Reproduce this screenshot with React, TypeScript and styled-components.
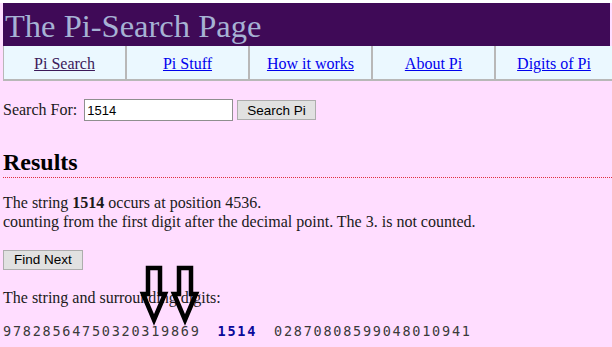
import styled, { createGlobalStyle } from "styled-components";

const GlobalStyle = createGlobalStyle`
  html, body {
    margin: 0;
    padding: 0;
    background-color: #ffddff;
    overflow: hidden;
  }
  body {
    font-family: "Liberation Serif", "Times New Roman", serif;
    font-size: 16px;
    color: #1a1a1a;
  }
`;

const Page = styled.div`
  position: relative;
  box-sizing: border-box;
  width: 612px;
  padding: 3px 0 0 3px;
  background: linear-gradient(#ffffff 0 3px, #ffddff 3px);
`;

const Header = styled.header`
  background-color: #3f0a57;
  height: 43px;
  margin-right: 2px;
  display: flex;
  align-items: center;
  padding-left: 2px;
`;

const Title = styled.h1`
  margin: 0;
  font-weight: normal;
  font-size: 32.5px;
  color: #a6b2d4;
  line-height: 1;
  padding-top: 3px;
`;

const Nav = styled.nav`
  display: grid;
  grid-template-columns: repeat(4, 123px) 1fr;
  background-color: #ebf8ff;
  border-bottom: 2px solid #b8b8b8;
  border-left: 1px solid #b8b8b8;
  height: 33px;
`;

const NavCell = styled.div<{ $last?: boolean }>`
  display: flex;
  align-items: center;
  justify-content: center;
  padding-top: 2px;
  border-right: ${(p) => (p.$last ? "none" : "2px solid #b8b8b8")};
`;

const NavLink = styled.a<{ $visited?: boolean }>`
  color: ${(p) => (p.$visited ? "#3c1a5a" : "#0000ee")};
  text-decoration: underline;
  font-size: 16px;
`;

const SearchRow = styled.form`
  display: flex;
  align-items: center;
  margin-top: 18px;
`;

const Label = styled.label`
  font-size: 16px;
  margin-right: 7px;
`;

const Input = styled.input`
  width: 143px;
  height: 18px;
  border: 1px solid #8f8f8f;
  padding: 1px 2px;
  font-family: "Liberation Sans", Arial, sans-serif;
  font-size: 13px;
  color: #000;
  margin: 0 4px 0 0;
`;

const Button = styled.button<{ $pad?: number }>`
  font-family: "Liberation Sans", Arial, sans-serif;
  font-size: 13.5px;
  color: #000;
  background-color: #e1e1e1;
  border: 1px solid #adadad;
  height: 20px;
  padding: 0 ${(p) => p.$pad ?? 9}px;
  margin: 0;
`;

const ResultsHeading = styled.h2`
  margin: 28px 0 0 0;
  font-size: 24px;
  font-weight: bold;
  color: #000;
  padding-bottom: 0;
  border-bottom: 1px dotted #e03040;
  line-height: 1.15;
`;

const Para = styled.p`
  margin: 15px 0 0 0;
  line-height: 19px;
`;

const FindRow = styled.div`
  margin-top: 19px;
  display: flex;
`;

const DigitsLabel = styled.p`
  margin: 18px 0 0 0;
  line-height: 19px;
`;

const Digits = styled.div`
  margin-top: 16px;
  font-family: "DejaVu Sans Mono", monospace;
  font-size: 13.5px;
  letter-spacing: 1.75px;
  color: #3a3a3a;
  display: flex;
  gap: 17px;
`;

const Match = styled.span`
  color: #0a0a9a;
  font-weight: bold;
`;

const Arrows = styled.svg`
  position: absolute;
  left: 138px;
  top: 264px;
  pointer-events: none;
`;

function DownArrow({ cx }: { cx: number }) {
  // hollow arrow: narrow shaft, wider head
  const d = `M${cx - 6} 4 L${cx + 6} 4 L${cx + 6} 30 L${cx + 11} 30 L${cx} 56 L${cx - 11} 30 L${cx - 6} 30 Z`;
  return <path d={d} fill="none" stroke="#000" strokeWidth={4.5} />;
}

export default function App() {
  return (
    <>
      <GlobalStyle />
      <Page>
        <Header>
          <Title>The Pi-Search Page</Title>
        </Header>
        <Nav>
          <NavCell>
            <NavLink href="#" $visited>
              Pi Search
            </NavLink>
          </NavCell>
          <NavCell>
            <NavLink href="#">Pi Stuff</NavLink>
          </NavCell>
          <NavCell>
            <NavLink href="#">How it works</NavLink>
          </NavCell>
          <NavCell>
            <NavLink href="#">About Pi</NavLink>
          </NavCell>
          <NavCell $last>
            <NavLink href="#">Digits of Pi</NavLink>
          </NavCell>
        </Nav>
        <SearchRow onSubmit={(e) => e.preventDefault()}>
          <Label>Search For:</Label>
          <Input defaultValue="1514" />
          <Button type="submit">Search Pi</Button>
        </SearchRow>
        <ResultsHeading>Results</ResultsHeading>
        <Para>
          The string <b>1514</b> occurs at position 4536.
          <br />
          counting from the first digit after the decimal point. The 3. is not
          counted.
        </Para>
        <FindRow>
          <Button $pad={10}>Find Next</Button>
        </FindRow>
        <DigitsLabel>The string and surrounding digits:</DigitsLabel>
        <Digits>
          <span>97828564750320319869</span>
          <Match>1514</Match>
          <span>02870808599048010941</span>
        </Digits>
        <Arrows width={70} height={64} viewBox="0 0 70 64">
          <DownArrow cx={16} />
          <DownArrow cx={47} />
        </Arrows>
      </Page>
    </>
  );
}
